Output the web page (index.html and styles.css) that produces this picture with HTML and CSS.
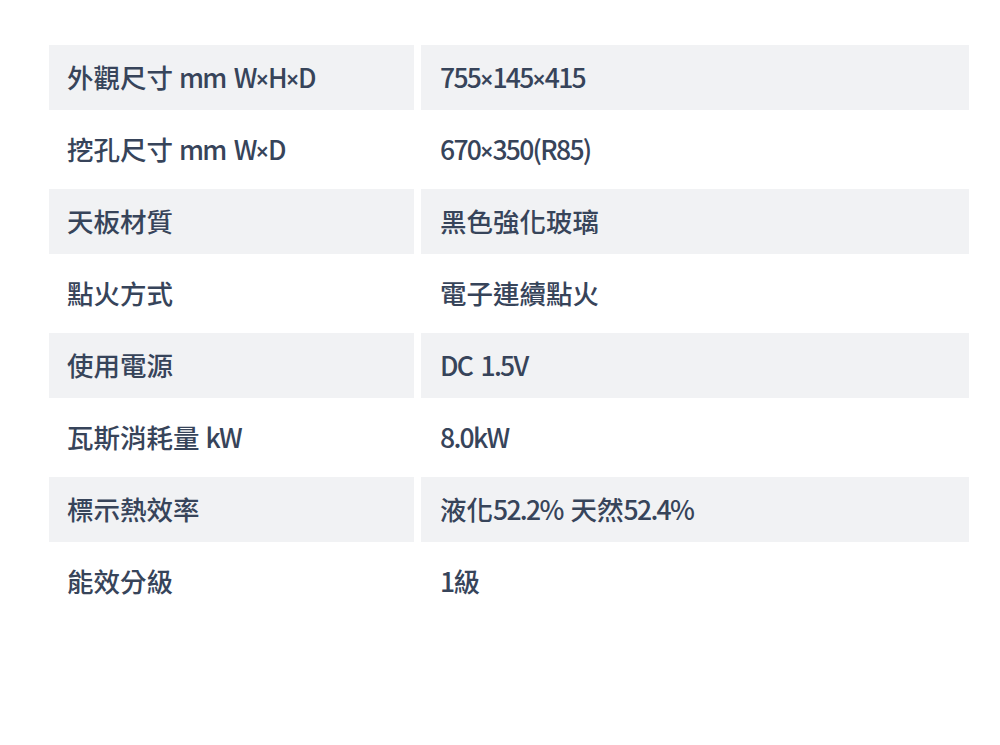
FILE: index.html
```html
<!DOCTYPE html>
<html lang="zh-Hant">
<head>
<meta charset="utf-8">
<link rel="stylesheet" href="styles.css">
</head>
<body>
<div class="spec">
  <div class="cell key shade">外觀尺寸&nbsp;<span class="lat">mm W<span class="x">×</span>H<span class="x">×</span>D</span></div><div class="cell val shade"><span class="lat">755<span class="x">×</span>145<span class="x">×</span>415</span></div>
  <div class="cell key">挖孔尺寸&nbsp;<span class="lat">mm W<span class="x">×</span>D</span></div><div class="cell val"><span class="lat">670<span class="x">×</span>350(R85)</span></div>
  <div class="cell key shade">天板材質</div><div class="cell val shade">黑色強化玻璃</div>
  <div class="cell key">點火方式</div><div class="cell val">電子連續點火</div>
  <div class="cell key shade">使用電源</div><div class="cell val shade"><span class="lat">DC 1.5V</span></div>
  <div class="cell key">瓦斯消耗量&nbsp;<span class="lat">kW</span></div><div class="cell val"><span class="lat">8.0kW</span></div>
  <div class="cell key shade">標示熱效率</div><div class="cell val shade">液化<span class="lat">52.2%</span><span class="sp"></span>天然<span class="lat">52.4%</span></div>
  <div class="cell key">能效分級</div><div class="cell val"><span class="lat">1</span>級</div>
</div>
</body>
</html>
```
FILE: styles.css
```css
html, body {
  margin: 0;
  padding: 0;
  background: #ffffff;
}
body {
  width: 1000px;
  height: 745px;
  overflow: hidden;
  font-family: "Noto Sans CJK TC", "Noto Sans", sans-serif;
  color: #37445a;
}
.spec {
  margin: 45px 0 0 49px;
  display: grid;
  grid-template-columns: 365px 548px;
  grid-auto-rows: 65px;
  gap: 7px;
}
.cell {
  display: flex;
  align-items: center;
  font-size: 26.5px;
  font-weight: 500;
  line-height: 1;
  white-space: nowrap;
}
.lat {
  letter-spacing: -1.7px;
  word-spacing: 4px;
}
.x {
  font-family: "Noto Sans", sans-serif;
  font-size: 23px;
  font-weight: 600;
  letter-spacing: -1px;
}
.sp {
  display: inline-block;
  width: 8px;
}
.key {
  padding-left: 18px;
}
.val {
  padding-left: 19px;
}
.shade {
  background: #f1f2f4;
}
```
